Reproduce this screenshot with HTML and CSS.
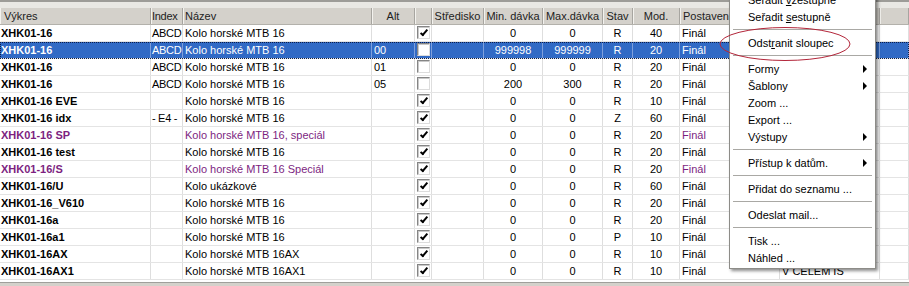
FILE: index.html
```html
<!DOCTYPE html>
<html>
	<head>
		<meta charset="utf-8">
		<title>Výkresy</title>
		<link rel="stylesheet" href="styles.css">
	</head>
	<body>
		<div class="topbar"></div>
		<div class="row head">
			<div class="h-vyk">Výkres</div><div class="idx">Index</div><div>Název</div><div class="ce">Alt</div><div></div><div class="ce">Středisko</div><div class="ce">Min. dávka</div><div class="ce">Max.dávka</div><div class="ce">Stav</div><div class="ce">Mod.</div><div class="h-post">Postavení</div><div>Dílna</div><div></div>
		</div>
		<div class="row">
			<div class="vyk">XHK01-16</div><div class="idx">ABCD</div><div>Kolo horské MTB 16</div><div></div><div><span class="chk on"></span></div><div></div><div class="ce">0</div><div class="ce">0</div><div class="ce">R</div><div class="ce">40</div><div>Finál</div><div></div><div></div>
		</div>
		<div class="row sel">
			<div class="vyk">XHK01-16</div><div class="idx">ABCD</div><div>Kolo horské MTB 16</div><div>00</div><div><span class="chk"></span></div><div></div><div class="ce">999998</div><div class="ce">999999</div><div class="ce">R</div><div class="ce">20</div><div>Finál</div><div></div><div></div>
		</div>
		<div class="row">
			<div class="vyk">XHK01-16</div><div class="idx">ABCD</div><div>Kolo horské MTB 16</div><div>01</div><div><span class="chk"></span></div><div></div><div class="ce">0</div><div class="ce">0</div><div class="ce">R</div><div class="ce">20</div><div>Finál</div><div></div><div></div>
		</div>
		<div class="row">
			<div class="vyk">XHK01-16</div><div class="idx">ABCD</div><div>Kolo horské MTB 16</div><div>05</div><div><span class="chk"></span></div><div></div><div class="ce">200</div><div class="ce">300</div><div class="ce">R</div><div class="ce">20</div><div>Finál</div><div></div><div></div>
		</div>
		<div class="row">
			<div class="vyk">XHK01-16 EVE</div><div class="idx"></div><div>Kolo horské MTB 16</div><div></div><div><span class="chk on"></span></div><div></div><div class="ce">0</div><div class="ce">0</div><div class="ce">R</div><div class="ce">10</div><div>Finál</div><div></div><div></div>
		</div>
		<div class="row">
			<div class="vyk">XHK01-16 idx</div><div class="idx">- E4 -</div><div>Kolo horské MTB 16</div><div></div><div><span class="chk on"></span></div><div></div><div class="ce">0</div><div class="ce">0</div><div class="ce">Z</div><div class="ce">60</div><div>Finál</div><div></div><div></div>
		</div>
		<div class="row">
			<div class="vyk pur">XHK01-16 SP</div><div class="idx"></div><div class="pur">Kolo horské MTB 16, speciál</div><div></div><div><span class="chk on"></span></div><div></div><div class="ce">0</div><div class="ce">0</div><div class="ce">R</div><div class="ce">20</div><div class="pur">Finál</div><div></div><div></div>
		</div>
		<div class="row">
			<div class="vyk">XHK01-16 test</div><div class="idx"></div><div>Kolo horské MTB 16</div><div></div><div><span class="chk on"></span></div><div></div><div class="ce">0</div><div class="ce">0</div><div class="ce">R</div><div class="ce">20</div><div>Finál</div><div></div><div></div>
		</div>
		<div class="row">
			<div class="vyk pur">XHK01-16/S</div><div class="idx"></div><div class="pur">Kolo horské MTB 16 Speciál</div><div></div><div><span class="chk on"></span></div><div></div><div class="ce">0</div><div class="ce">0</div><div class="ce">R</div><div class="ce">20</div><div class="pur">Finál</div><div></div><div></div>
		</div>
		<div class="row">
			<div class="vyk">XHK01-16/U</div><div class="idx"></div><div>Kolo ukázkové</div><div></div><div><span class="chk on"></span></div><div></div><div class="ce">0</div><div class="ce">0</div><div class="ce">R</div><div class="ce">60</div><div>Finál</div><div></div><div></div>
		</div>
		<div class="row">
			<div class="vyk">XHK01-16_V610</div><div class="idx"></div><div>Kolo horské MTB 16</div><div></div><div><span class="chk on"></span></div><div></div><div class="ce">0</div><div class="ce">0</div><div class="ce">R</div><div class="ce">20</div><div>Finál</div><div></div><div></div>
		</div>
		<div class="row">
			<div class="vyk">XHK01-16a</div><div class="idx"></div><div>Kolo horské MTB 16</div><div></div><div><span class="chk on"></span></div><div></div><div class="ce">0</div><div class="ce">0</div><div class="ce">R</div><div class="ce">20</div><div>Finál</div><div></div><div></div>
		</div>
		<div class="row">
			<div class="vyk">XHK01-16a1</div><div class="idx"></div><div>Kolo horské MTB 16</div><div></div><div><span class="chk on"></span></div><div></div><div class="ce">0</div><div class="ce">0</div><div class="ce">P</div><div class="ce">10</div><div>Finál</div><div></div><div></div>
		</div>
		<div class="row">
			<div class="vyk">XHK01-16AX</div><div class="idx"></div><div>Kolo horské MTB 16AX</div><div></div><div><span class="chk on"></span></div><div></div><div class="ce">0</div><div class="ce">0</div><div class="ce">R</div><div class="ce">10</div><div>Finál</div><div></div><div></div>
		</div>
		<div class="row">
			<div class="vyk">XHK01-16AX1</div><div class="idx"></div><div>Kolo horské MTB 16AX1</div><div></div><div><span class="chk on"></span></div><div></div><div class="ce">0</div><div class="ce">0</div><div class="ce">R</div><div class="ce">10</div><div>Finál</div><div>V CELEM IS</div><div></div>
		</div>
		<div class="bottombar"></div>

		<div class="menu">
			<div class="item"><span>Seřadit <u>v</u>zestupně</span></div>
			<div class="item"><span>Seřadit <u>s</u>estupně</span></div>
			<div class="sep"></div>
			<div class="item"><span>Odst<u>r</u>anit sloupec</span></div>
			<div class="sep"></div>
			<div class="item"><span>Formy</span><span class="arrow"></span></div>
			<div class="item"><span>Šablony</span><span class="arrow"></span></div>
			<div class="item"><span>Zoom ...</span></div>
			<div class="item"><span>Export ...</span></div>
			<div class="item"><span>Výstupy</span><span class="arrow"></span></div>
			<div class="sep"></div>
			<div class="item"><span>Přístup k datům.</span><span class="arrow"></span></div>
			<div class="sep"></div>
			<div class="item"><span>Přidat do seznamu ...</span></div>
			<div class="sep"></div>
			<div class="item"><span>Odeslat mail...</span></div>
			<div class="sep"></div>
			<div class="item"><span>Tisk ...</span></div>
			<div class="item"><span>Náhled ...</span></div>
		</div>
		<svg class="circle" width="909" height="286" viewBox="0 0 909 286">
			<ellipse cx="785" cy="44" rx="65" ry="16.5" fill="none" stroke="#b3263a" stroke-width="1"/>
		</svg>
	</body>
</html>
```

FILE: styles.css
```css
html, body{
	margin: 0;
	padding: 0;
}
body{
	position: relative;
	width: 909px;
	height: 286px;
	overflow: hidden;
	background: #fff;
	color: #000;
	font-family: "Liberation Sans", Arial, sans-serif;
	font-size: 11px;
}
.topbar{
	height: 8px;
	box-sizing: border-box;
	border-top: 2px solid #9d9c98;
	background: #e9e8e4;
}
.row{
	display: grid;
	grid-template-columns: 151px 32px 189px 43px 17px 52px 59px 60px 30px 47px 100px 100px 1fr;
	height: 17px;
	box-sizing: border-box;
	border-bottom: 1px solid #e4e4e4;
}
.row > div{
	padding: 0 2px;
	line-height: 16px;
	white-space: nowrap;
	overflow: hidden;
	border-right: 1px solid #dedede;
}
.row > .ce{
	text-align: center;
}
.row > .vyk{
	padding-left: 1px;
	font-weight: bold;
}
.row > .idx{
	padding: 0 0 0 1px;
	letter-spacing: -0.3px;
}
.pur{
	color: #7d1f7f;
}
.head{
	background: #d4d1cb;
	color: #222;
	border-bottom: 1px solid #b3b1ab;
}
.head > div{
	border-right: 1px solid #a7a5a0;
	box-shadow: inset 1px 0 #f3f2ee;
}
.head > .h-vyk{
	padding-left: 4px;
	font-weight: normal;
}
.head > .h-post{
	padding-left: 3px;
}
.sel{
	background: #316ac5;
	color: #fff;
	outline: 1px dotted #0d1e48;
	outline-offset: -1px;
}
.sel > div{
	border-right-color: #7d9fdc;
}
.chk{
	position: relative;
	display: block;
	width: 13px;
	height: 13px;
	box-sizing: border-box;
	margin-top: 1px;
	background: #fff;
	border: 1px solid;
	border-color: #858585 #dcdcdc #dcdcdc #858585;
	box-shadow: inset 1px 1px #c9c9c9;
}
.chk.on::after{
	content: "";
	position: absolute;
	left: 4px;
	top: 1px;
	width: 2px;
	height: 6px;
	border: solid #000;
	border-width: 0 2px 2px 0;
	transform: rotate(40deg);
}
.bottombar{
	height: 6px;
	box-sizing: border-box;
	margin-top: 2px;
	border-top: 1px solid #a09f9b;
	background: #d4d1cb;
}
.menu{
	position: absolute;
	left: 729px;
	top: -12px;
	width: 147px;
	box-sizing: border-box;
	padding: 2px;
	background: #fff;
	border: 1px solid #8d8c88;
	box-shadow: 2px 2px 3px rgba(0, 0, 0, 0.45);
}
.menu .item{
	display: flex;
	align-items: center;
	height: 17px;
	padding-left: 16px;
	white-space: nowrap;
}
.menu .arrow{
	margin-left: auto;
	margin-right: 6px;
	width: 0;
	height: 0;
	border-left: 4px solid #000;
	border-top: 4px solid transparent;
	border-bottom: 4px solid transparent;
}
.menu .sep{
	height: 9px;
	display: flex;
	align-items: center;
	padding: 0 1px;
}
.menu .sep::before{
	content: "";
	flex: 1;
	height: 1px;
	background: #a9a8a4;
}
.circle{
	position: absolute;
	left: 0;
	top: 0;
	pointer-events: none;
}
```
